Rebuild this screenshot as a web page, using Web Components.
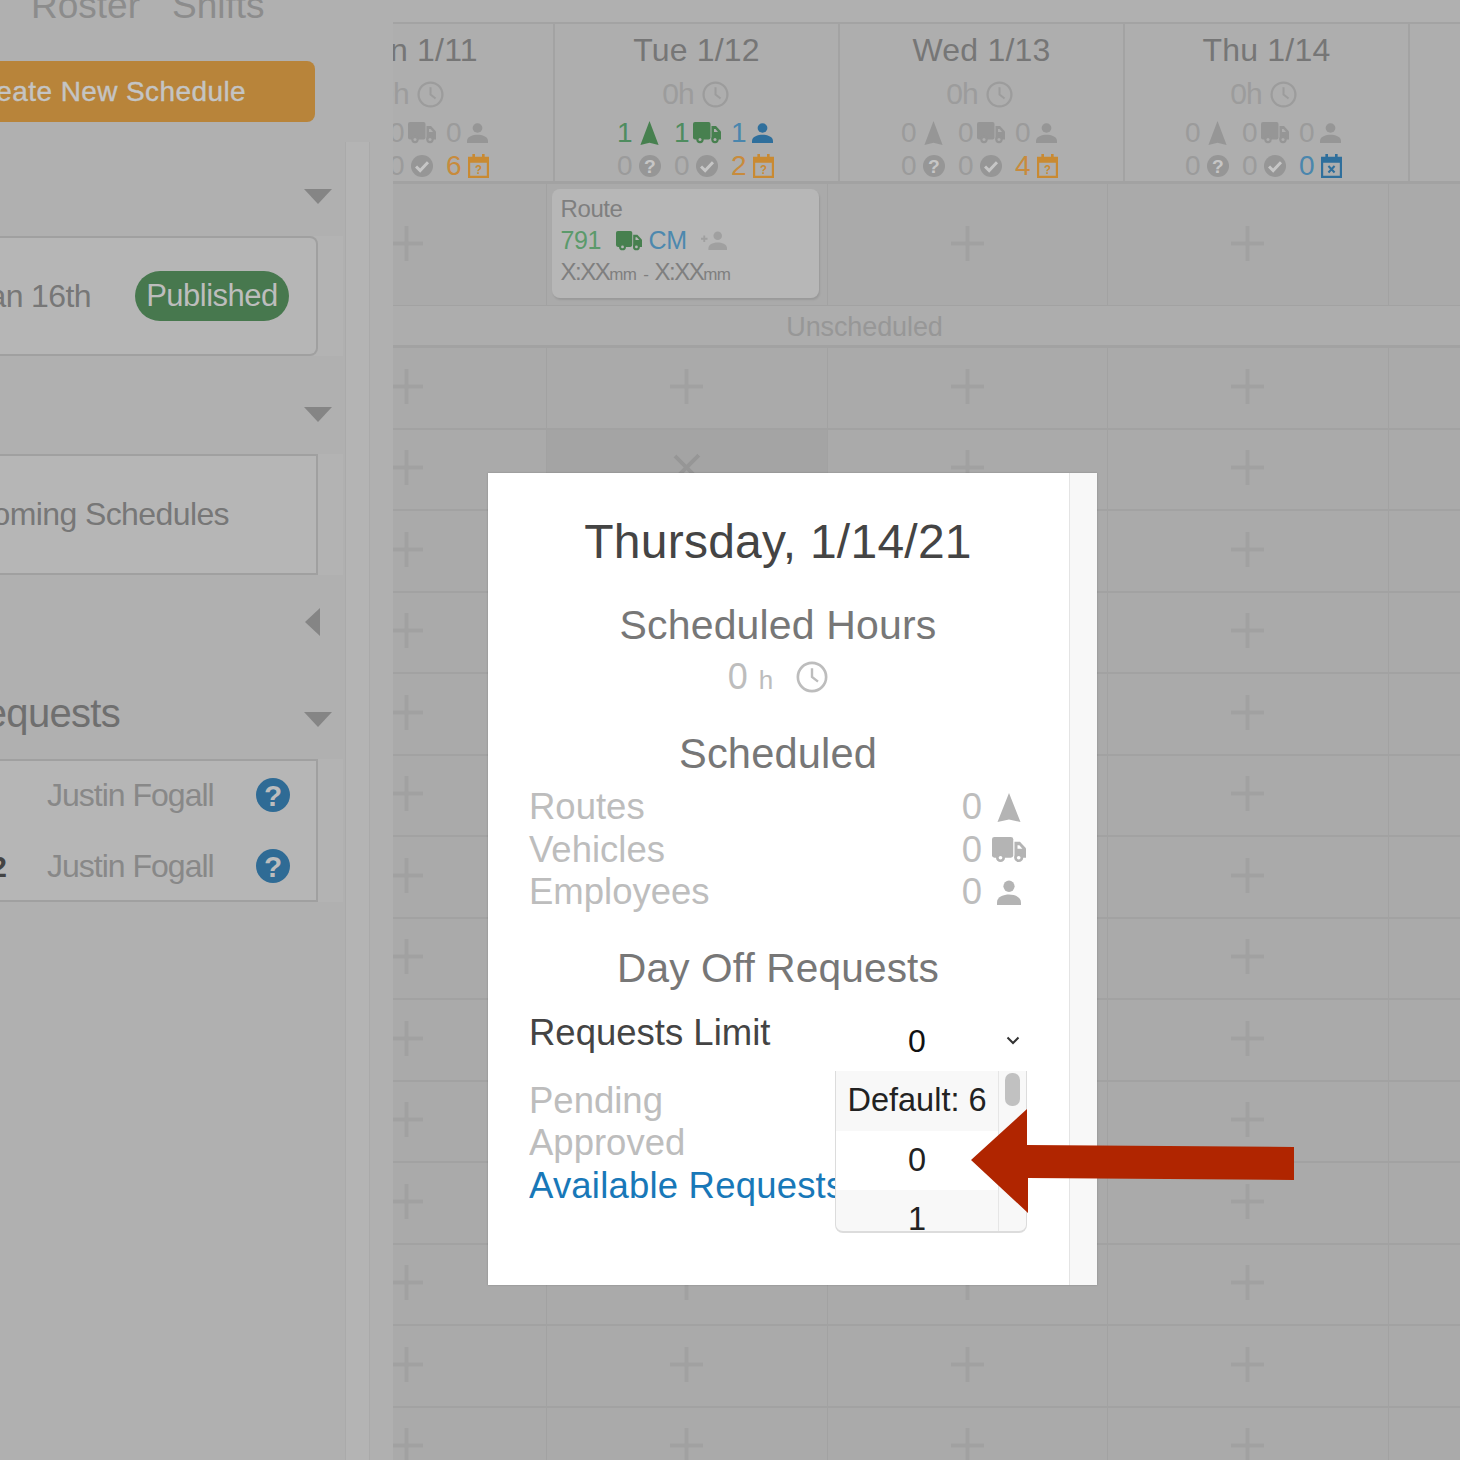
<!DOCTYPE html>
<html>
<head>
<meta charset="utf-8">
<title>Schedule</title>
<style>
  html, body { margin: 0; padding: 0; background: #aaa; }
  body { font-family: "Liberation Sans", Arial, sans-serif; }
</style>
</head>
<body>
<schedule-app></schedule-app>
<script>
const SANS = `"Liberation Sans", Arial, sans-serif`;

const ICONS = {
  nav: `<svg viewBox="0 0 24 28" preserveAspectRatio="none"><path d="M12 0 23.500 28 12 25.500 .5 28z"/></svg>`,
  truck: `<svg viewBox="0 0 28 22" preserveAspectRatio="none"><mask id="m"><rect width="28" height="22" fill="#fff"/><circle cx="7" cy="17.500" r="1.500" fill="#000"/><circle cx="22" cy="17.500" r="1.500" fill="#000"/><path d="M21 7h1.500l2.500 3h-4z" fill="#000"/></mask><g mask="url(#m)"><rect width="17.500" height="17.500" rx="2"/><path d="M18.500 4H23l5 5.500v8H18.500z"/><circle cx="7" cy="17.500" r="3.700"/><circle cx="22" cy="17.500" r="3.700"/></g></svg>`,
  person: `<svg viewBox="0 0 24 24" preserveAspectRatio="none"><circle cx="12" cy="6" r="5.600"/><path d="M0 24v-2.500C0 16 7 14 12 14s12 2 12 7.500V24z"/></svg>`,
  clock: `<svg viewBox="0 0 24 24"><circle cx="12" cy="12" r="10.600" fill="none" stroke="currentColor" stroke-width="2"/><path d="M12 5.500V12l4.500 3.500" fill="none" stroke="currentColor" stroke-width="1.800"/></svg>`,
  help: `<svg viewBox="0 0 24 24"><circle cx="12" cy="12" r="12"/><text x="12" y="19.500" text-anchor="middle" font-family='"Liberation Sans", Arial, sans-serif' font-weight="700" font-size="21" style="fill:var(--ink,#c6c6c6)">?</text></svg>`,
  check: `<svg viewBox="0 0 24 24"><circle cx="12" cy="12" r="12"/><path d="M5.500 12.500l4.500 4.500L18.500 8" fill="none" stroke-width="3.200" style="stroke:var(--ink,#c6c6c6)"/></svg>`,
  cal: `<svg viewBox="0 0 24 26" preserveAspectRatio="none"><path fill-rule="evenodd" d="M5 0h3v3h8V0h3v3h5v23H0V3h5zM2.500 9.500v14h19v-14z"/><text x="12" y="22" text-anchor="middle" font-family='"Liberation Sans", Arial, sans-serif' font-weight="700" font-size="13">?</text></svg>`,
  calx: `<svg viewBox="0 0 24 26" preserveAspectRatio="none"><path fill-rule="evenodd" d="M5 0h3v3h8V0h3v3h5v23H0V3h5zM2.500 9.500v14h19v-14z"/><path d="M8.500 13l7 7m0-7l-7 7" fill="none" stroke="currentColor" stroke-width="2.400"/></svg>`,
  addperson: `<svg viewBox="0 0 28 20" preserveAspectRatio="none"><circle cx="18" cy="5" r="4.600"/><path d="M8 20v-2c0-4.500 6-6 10-6s10 1.500 10 6v2z"/><path d="M0 7.200h7v2H0zM2.500 4.700h2v7h-2z"/></svg>`
};

class UiIcon extends HTMLElement {
  connectedCallback() {
    if (this.shadowRoot) return;
    const w = this.getAttribute('w') || 24;
    const h = this.getAttribute('h') || 24;
    this.attachShadow({ mode: 'open' }).innerHTML = `
      <style>
        :host { display: inline-flex; flex: none; width: ${w}px; height: ${h}px; color: var(--icon, #999); }
        svg { width: 100%; height: 100%; display: block; fill: currentColor; }
      </style>
      ${ICONS[this.getAttribute('name')] || ''}`;
  }
}
customElements.define('ui-icon', UiIcon);

const ICON_SIZE = {
  nav: [19, 24], truck: [28, 22], person: [21, 20], help: [22, 22],
  check: [22, 22], cal: [21, 24], calx: [21, 24]
};
const ICON_GAP = { nav: 7, truck: 3, person: 5, help: 6, check: 6, cal: 6, calx: 6 };
const TONES = {
  gray: ['#9b9b9b', '#969696'],
  green: ['#4f8c5f', '#47804f'],
  blue: ['#4a86ad', '#2f6f9c'],
  orange: ['#c88b3c', '#c98a32']
};

class DayHead extends HTMLElement {
  connectedCallback() {
    if (this.shadowRoot) return;
    const nudge = this.getAttribute('nudge') || 0;
    const row = str => (str || '').split(' ').filter(s => s).map(s => {
      const [n, icon, tone] = s.split(':');
      const [text, ink] = TONES[tone || 'gray'];
      const [w, h] = ICON_SIZE[icon];
      return `<span class="stat" style="color:${text};--icon:${ink};gap:${ICON_GAP[icon]}px">${n}<ui-icon name="${icon}" w="${w}" h="${h}"></ui-icon></span>`;
    }).join('');
    this.attachShadow({ mode: 'open' }).innerHTML = `
      <style>
        :host { display: block; height: 157px; border-right: 2px solid #a3a3a3; box-sizing: border-box; font-family: ${SANS}; text-align: center; }
        .title { font-size: 32px; line-height: 52px; color: #767676; letter-spacing: .2px; }
        .hours { height: 36px; display: flex; align-items: center; justify-content: center; gap: 8px; font-size: 30px; color: #9c9c9c; --icon: #9c9c9c; padding-right: ${Math.max(nudge, 2)}px; }
        .hours span { letter-spacing: -1px; }
        .stats { display: flex; justify-content: center; height: 33px; align-items: center; font-size: 28px; padding-right: ${nudge}px; }
        .stats.first { margin-top: 4px; }
        .stat { width: 57px; display: inline-flex; align-items: center; }
        .stat:last-child { width: 43px; }
      </style>
      <div class="title">${this.getAttribute('title')}</div>
      <div class="hours"><span>0h</span><ui-icon name="clock" w="27" h="27"></ui-icon></div>
      <div class="stats first">${row(this.getAttribute('top'))}</div>
      <div class="stats">${row(this.getAttribute('bottom'))}</div>`;
  }
}
customElements.define('day-head', DayHead);

class BoardCell extends HTMLElement {
  connectedCallback() {
    if (this.shadowRoot) return;
    const close = this.hasAttribute('close');
    this.attachShadow({ mode: 'open' }).innerHTML = `
      <style>
        :host { display: flex; align-items: center; justify-content: center; box-sizing: border-box; padding-bottom: 3px; border-right: 1px solid #a2a2a2; border-bottom: 2px solid #a2a2a2; background: ${close ? '#a4a4a4' : '#aaa'}; }
        .mark { width: 33px; height: 35px; color: ${close ? '#969696' : '#a1a1a1'}; transform: ${close ? 'rotate(45deg)' : 'none'}; }
        svg { display: block; width: 100%; height: 100%; fill: currentColor; }
      </style>
      <div class="mark"><svg viewBox="0 0 33 35"><path d="M14.500 0h4v15.500H33v4H18.500V35h-4V19.500H0v-4h14.500z"/></svg></div>`;
  }
}
customElements.define('board-cell', BoardCell);

class RouteCard extends HTMLElement {
  constructor() {
    super();
    this.attachShadow({ mode: 'open' }).innerHTML = `
      <style>
        :host { display: block; box-sizing: border-box; height: 109px; width: 267px; padding: 6px 9px; background: #b7b7b7; border-radius: 8px; box-shadow: 1px 2px 2px rgba(0,0,0,.1); font-family: ${SANS}; color: #7f7f7f; }
        .name { font-size: 24px; line-height: 27px; letter-spacing: -.4px; }
        .line { display: flex; align-items: center; height: 33px; margin-top: 2px; font-size: 25px; letter-spacing: -.4px; }
        .num { color: #5b9a6b; width: 55px; }
        .who { color: #4c88ae; margin: 0 14px 0 7px; }
        .time { font-size: 24px; line-height: 30px; margin-top: 0; letter-spacing: -1.500px; white-space: nowrap; }
        .time small { font-size: 17px; letter-spacing: -.6px; }
        .time i { font-style: normal; font-size: 17px; margin: 0 7px; }
      </style>
      <div class="name">Route</div>
      <div class="line">
        <span class="num">791</span>
        <ui-icon name="truck" w="26" h="20" style="--icon:#47804f"></ui-icon>
        <span class="who">CM</span>
        <ui-icon name="addperson" w="26" h="19" style="--icon:#a0a0a0"></ui-icon>
      </div>
      <div class="time">X:XX<small>mm</small><i>-</i>X:XX<small>mm</small></div>`;
  }
}
customElements.define('route-card', RouteCard);

class ScheduleBoard extends HTMLElement {
  connectedCallback() {
    if (this.shadowRoot) return;
    let rows = '';
    for (let r = 0; r < 14; r++) {
      for (let c = 0; c < 5; c++) {
        rows += `<board-cell ${r === 1 && c === 1 ? 'close' : ''}></board-cell>`;
      }
    }
    this.attachShadow({ mode: 'open' }).innerHTML = `
      <style>
        :host { display: block; flex: 1; min-width: 0; height: 1460px; overflow: hidden; background: #aaa; box-shadow: inset 6px 0 8px -6px rgba(0,0,0,.08); }
        .top { height: 22px; background: #b0b0b0; border-bottom: 2px solid #a3a3a3; }
        .heads { display: grid; grid-template-columns: repeat(5, 285px); margin-left: -123px; height: 157px; background: #aeaeae; border-bottom: 3px solid #a2a2a2; }
        .cols { display: grid; grid-template-columns: repeat(5, 280.500px); margin-left: -126.500px; }
        .first { height: 122px; }
        .first board-cell { border-bottom-width: 1px; }
        .slot { background: #aaa; border-right: 1px solid #a2a2a2; border-bottom: 1px solid #a2a2a2; box-sizing: border-box; padding: 5px 0 0 4.500px; }
        .band { height: 39px; background: #adadad; border-bottom: 3px solid #a2a2a2; font: 27px/42px ${SANS}; color: #979797; text-align: center; padding-right: 124px; letter-spacing: -.1px; }
        .rows { grid-auto-rows: 81.500px; }
      </style>
      <div class="top"></div>
      <div class="heads">
        <day-head title="Mon 1/11" nudge="2" top="0:nav 0:truck 0:person" bottom="0:help 0:check 6:cal:orange"></day-head>
        <day-head title="Tue 1/12" nudge="2" top="1:nav:green 1:truck:green 1:person:blue" bottom="0:help 0:check 2:cal:orange"></day-head>
        <day-head title="Wed 1/13" nudge="4" top="0:nav 0:truck 0:person" bottom="0:help 0:check 4:cal:orange"></day-head>
        <day-head title="Thu 1/14" nudge="6" top="0:nav 0:truck 0:person" bottom="0:help 0:check 0:calx:blue"></day-head>
        <div></div>
      </div>
      <div class="cols first">
        <board-cell></board-cell>
        <div class="slot"><route-card></route-card></div>
        <board-cell></board-cell>
        <board-cell></board-cell>
        <board-cell></board-cell>
      </div>
      <div class="band">Unscheduled</div>
      <div class="cols rows">${rows}</div>`;
  }
}
customElements.define('schedule-board', ScheduleBoard);

class SideSection extends HTMLElement {
  connectedCallback() {
    if (this.shadowRoot) return;
    const side = this.getAttribute('arrow') === 'left';
    const h = this.getAttribute('h');
    const label = this.getAttribute('label');
    this.attachShadow({ mode: 'open' }).innerHTML = `
      <style>
        :host { display: block; font-family: ${SANS}; }
        .head { height: ${h}px; box-sizing: border-box; padding: 0 ${side ? 25 : 13}px 32px 0; display: flex; align-items: flex-end; justify-content: flex-end; }
        .label { flex: none; width: 119px; display: flex; justify-content: flex-end; margin-right: 184px; white-space: nowrap; font-size: 40px; line-height: 46px; letter-spacing: -.7px; color: #6f6f6f; transform: translateY(9px); }
        .tri { flex: none; width: 0; height: 0; border-style: solid; ${side
          ? 'border-width: 14px 15px 14px 0; border-color: transparent #858585 transparent transparent;'
          : 'border-width: 15px 14.500px 0 14.500px; border-color: #858585 transparent transparent transparent;'} }
        .wrap { width: 343px; background: #b3b3b3; }
      </style>
      <div class="head">${label ? `<div class="label">${label}</div>` : ''}<div class="tri"></div></div>
      <div class="wrap"><slot></slot></div>`;
  }
}
customElements.define('side-section', SideSection);

class SideCard extends HTMLElement {
  connectedCallback() {
    if (this.shadowRoot) return;
    const r = this.getAttribute('r') || 0;
    this.attachShadow({ mode: 'open' }).innerHTML = `
      <style>
        :host { display: block; width: 318px; box-sizing: border-box; height: ${this.getAttribute('h')}px; background: #b6b6b6; border: solid #a0a0a0; border-width: 2px 2px 2px 0; border-radius: 0 ${r}px ${r}px 0; font-family: ${SANS}; overflow: hidden; }
      </style>
      <slot></slot>`;
  }
}
customElements.define('side-card', SideCard);

class StatusRow extends HTMLElement {
  connectedCallback() {
    if (this.shadowRoot) return;
    const status = this.getAttribute('status');
    this.attachShadow({ mode: 'open' }).innerHTML = `
      <style>
        :host { display: flex; align-items: center; justify-content: flex-end; height: 100%; white-space: nowrap; font-size: 32px; color: #777; padding-right: ${this.getAttribute('pad')}px; box-sizing: border-box; letter-spacing: -.6px; }
        span { flex: none; }
        .pill { margin-left: 44px; width: 154px; height: 50px; border-radius: 25px; background: #47784e; color: #bdbdbd; font-size: 31px; letter-spacing: -.5px; display: flex; align-items: center; justify-content: center; }
      </style>
      <span>${this.getAttribute('text')}</span>${status ? `<span class="pill">${status}</span>` : ''}`;
  }
}
customElements.define('status-row', StatusRow);

class RequestRow extends HTMLElement {
  connectedCallback() {
    if (this.shadowRoot) return;
    const date = this.getAttribute('date');
    this.attachShadow({ mode: 'open' }).innerHTML = `
      <style>
        :host { display: flex; align-items: center; height: 71px; white-space: nowrap; font-size: 32px; color: #888; }
        .date { width: 47px; flex: none; margin-top: -2px; box-sizing: border-box; padding-right: 40px; display: flex; justify-content: flex-end; color: #444; font-weight: 700; font-size: 30px; }
        .name { width: 209px; flex: none; letter-spacing: -1px; margin-top: -2px; }
        ui-icon { margin-top: -4px; }
      </style>
      <span class="date">${date || ''}</span>
      <span class="name">${this.getAttribute('name')}</span>
      <ui-icon name="help" w="34" h="34" style="--icon:#2f6b95;--ink:#bdbdbd"></ui-icon>`;
  }
}
customElements.define('request-row', RequestRow);

class SideBar extends HTMLElement {
  constructor() {
    super();
    this.attachShadow({ mode: 'open' }).innerHTML = `
      <style>
        :host { display: grid; flex: none; width: 393px; height: 1460px; overflow: hidden; background: #b0b0b0; grid-template-columns: 345px 25px 23px; grid-template-rows: 142px 1fr; font-family: ${SANS}; }
        .top { grid-column: 1 / 4; }
        .tabs { display: flex; gap: 32px; padding-left: 31px; margin-top: -14px; font-size: 37px; line-height: 40px; color: #8c8c8c; }
        .create { margin-top: 35px; width: 315px; height: 61px; background: #b8843a; border-radius: 0 8px 8px 0; color: #c4c4c4; font-size: 28px; letter-spacing: .4px; -webkit-text-stroke: .4px #c4c4c4; display: flex; align-items: center; justify-content: flex-end; padding-right: 69px; box-sizing: border-box; white-space: nowrap; overflow: hidden; }
        .track { background: #b4b4b4; border: solid #aaa; border-width: 0 1px; }
      </style>
      <div class="top">
        <div class="tabs"><span>Roster</span><span>Shifts</span></div>
        <div class="create">Create New Schedule</div>
      </div>
      <div class="panel">
        <side-section h="94"><side-card h="120" r="8"><status-row text="Jan 16th" status="Published" pad="27"></status-row></side-card></side-section>
        <side-section h="98"><side-card h="121"><status-row text="Upcoming Schedules" pad="87"></status-row></side-card></side-section>
        <side-section h="93" arrow="left"></side-section>
        <side-section h="91" label="Day Off Requests"><side-card h="143">
          <request-row name="Justin Fogall"></request-row>
          <request-row name="Justin Fogall" date="2"></request-row>
        </side-card></side-section>
      </div>
      <div class="track"></div>`;
  }
}
customElements.define('side-bar', SideBar);

class LimitMenu extends HTMLElement {
  constructor() {
    super();
    this.attachShadow({ mode: 'open' }).innerHTML = `
      <style>
        :host { position: absolute; left: 347px; top: 598px; width: 192px; height: 162px; box-sizing: border-box; display: flex; overflow: hidden; background: #f8f8f8; border: solid #dcdcdc; border-width: 0 1px 2px 1px; border-radius: 0 0 8px 8px; font: 32.500px ${SANS}; color: #222; }
        .items { flex: 1; min-width: 0; }
        .item { height: 59.500px; display: flex; align-items: center; justify-content: center; }
        .on { background: #fff; }
        .bar { width: 28px; flex: none; box-sizing: border-box; border-left: 1px solid #e6e6e6; padding: 2px 0 0 6px; }
        .thumb { width: 15px; height: 33px; border-radius: 7px; background: #c1c1c1; }
      </style>
      <div class="items">
        <div class="item">Default: 6</div>
        <div class="item on">0</div>
        <div class="item">1</div>
      </div>
      <div class="bar"><div class="thumb"></div></div>`;
  }
}
customElements.define('limit-menu', LimitMenu);

class CountRow extends HTMLElement {
  connectedCallback() {
    if (this.shadowRoot) return;
    this.attachShadow({ mode: 'open' }).innerHTML = `
      <style>
        :host { display: grid; grid-template-columns: 1fr auto 34px; gap: 10px; height: 42.500px; margin-right: 1px; align-items: center; font-size: 36.500px; color: #bdbdbd; --icon: #b4b4b4; }
        ui-icon { justify-self: center; }
      </style>
      <span>${this.getAttribute('label')}</span><span>0</span>
      <ui-icon name="${this.getAttribute('icon')}" w="${this.getAttribute('w')}" h="${this.getAttribute('h')}"></ui-icon>`;
  }
}
customElements.define('count-row', CountRow);

class DayModal extends HTMLElement {
  constructor() {
    super();
    this.attachShadow({ mode: 'open' }).innerHTML = `
      <style>
        :host { position: absolute; left: 488px; top: 473px; width: 609px; height: 812px; display: flex; background: #fff; font-family: ${SANS}; box-shadow: 0 0 2px rgba(0,0,0,.2); }
        .body { flex: 1; min-width: 0; box-sizing: border-box; padding: 41px 42px 0 41px; }
        .track { width: 28px; flex: none; box-sizing: border-box; background: #f8f8f8; border-left: 1px solid #e4e4e4; }
        h1, h2 { margin: 0; font-weight: 400; text-align: center; }
        h1 { font-size: 48px; line-height: 56px; color: #444; letter-spacing: .25px; }
        h2 { font-size: 41px; line-height: 46px; color: #777; letter-spacing: .15px; }
        .hours { height: 40px; margin-top: 9px; display: flex; justify-content: center; align-items: center; color: #bdbdbd; font-size: 36px; --icon: #bdbdbd; }
        .hours small { font-size: 26px; margin: 6px 23px 0 11px; }
        .limit { display: grid; grid-template-columns: 1fr 192px; height: 44px; margin-top: 20px; font-size: 36.500px; line-height: 44px; color: #444; }
        .value { display: grid; grid-template-columns: 1fr 28px; align-items: center; color: #111; font-size: 32px; text-align: center; transform: translateY(8px); }
        .value svg { justify-self: center; }
        .plain { font-size: 36.500px; line-height: 42.500px; color: #bdbdbd; white-space: nowrap; overflow: hidden; }
        .plain a { color: #1878b8; text-decoration: none; letter-spacing: .2px; }
      </style>
      <div class="body">
        <h1>Thursday, 1/14/21</h1>
        <h2 style="margin-top:32px">Scheduled Hours</h2>
        <div class="hours"><span>0</span><small>h</small><ui-icon name="clock" w="32" h="32"></ui-icon></div>
        <h2 style="margin-top:34px;margin-bottom:9px;font-size:41.600px">Scheduled</h2>
        <count-row label="Routes" icon="nav" w="24" h="29"></count-row>
        <count-row label="Vehicles" icon="truck" w="34" h="26"></count-row>
        <count-row label="Employees" icon="person" w="24" h="25"></count-row>
        <h2 style="margin-top:31px;font-size:40.600px">Day Off Requests</h2>
        <div class="limit">
          <span>Requests Limit</span>
          <div class="value"><span>0</span><svg width="14" height="9" viewBox="0 0 14 9"><path d="M1.500 1.500 7 7l5.500-5.500" fill="none" stroke="#333" stroke-width="2"/></svg></div>
        </div>
        <div class="plain" style="margin-top:25px">Pending</div>
        <div class="plain">Approved</div>
        <div class="plain"><a>Available Requests</a></div>
      </div>
      <div class="track"></div>
      <limit-menu></limit-menu>`;
  }
}
customElements.define('day-modal', DayModal);

class ScheduleApp extends HTMLElement {
  constructor() {
    super();
    this.attachShadow({ mode: 'open' }).innerHTML = `
      <style>
        :host { display: flex; position: relative; width: 1460px; height: 1460px; overflow: hidden; }
        .arrow { position: absolute; left: 971px; top: 1109px; width: 324px; height: 105px; }
      </style>
      <side-bar></side-bar>
      <schedule-board></schedule-board>
      <day-modal></day-modal>
      <svg class="arrow" viewBox="0 0 324 105"><path fill="#b02500" d="M0 51 56 0V36L323 38V71L57 69V104z"/></svg>`;
  }
}
customElements.define('schedule-app', ScheduleApp);
</script>
</body>
</html>
